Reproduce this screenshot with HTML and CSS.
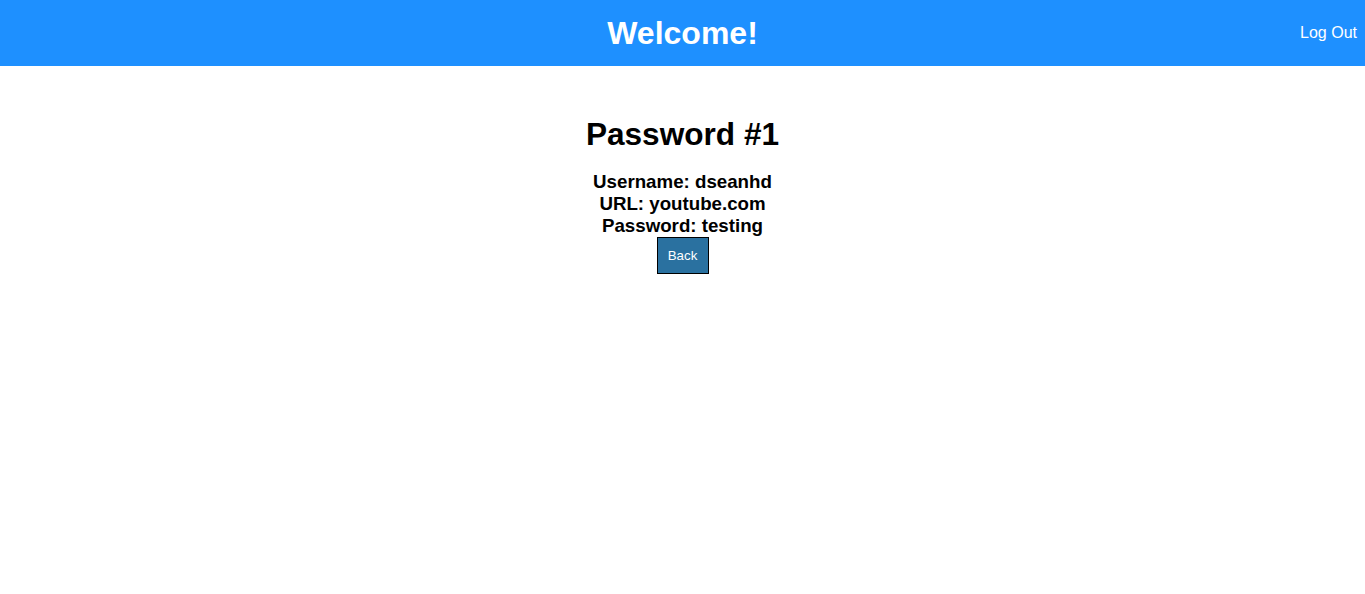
FILE: index.html
```html
<!DOCTYPE html>
<html>
<head>
<meta charset="utf-8">
<link rel="stylesheet" href="styles.css">
</head>
<body>
<header class="topbar">
  <h1 class="title">Welcome!</h1>
  <a class="logout" href="#">Log Out</a>
</header>
<main class="content">
  <h2 class="heading">Password #1</h2>
  <div class="details">
    <div class="line">Username: dseanhd</div>
    <div class="line">URL: youtube.com</div>
    <div class="line">Password: testing</div>
  </div>
  <button class="back">Back</button>
</main>
</body>
</html>
```
FILE: styles.css
```css
html, body {
  margin: 0;
  padding: 0;
  background: #fff;
  font-family: "Liberation Sans", Arial, sans-serif;
}
.topbar {
  height: 66px;
  background: #1e90ff;
  display: flex;
  align-items: center;
  justify-content: center;
  position: relative;
}
.title {
  margin: 0;
  color: #fff;
  font-size: 32px;
  font-weight: bold;
}
.logout {
  position: absolute;
  right: 8px;
  top: 50%;
  transform: translateY(-50%);
  color: #fff;
  text-decoration: none;
  font-size: 16px;
}
.content {
  display: flex;
  flex-direction: column;
  align-items: center;
  padding-top: 50px;
}
.heading {
  margin: 0 0 18px;
  font-size: 31.6px;
  line-height: 37px;
  font-weight: bold;
  color: #000;
}
.details {
  text-align: center;
  font-weight: bold;
  font-size: 18.72px;
  line-height: 22px;
  color: #000;
}
.back {
  margin-top: 0;
  width: 52px;
  height: 37px;
  background: #2a71a0;
  color: #fff;
  border: 1px solid #000;
  font-family: "Liberation Sans", Arial, sans-serif;
  font-size: 13.3px;
  padding: 0;
}
```
